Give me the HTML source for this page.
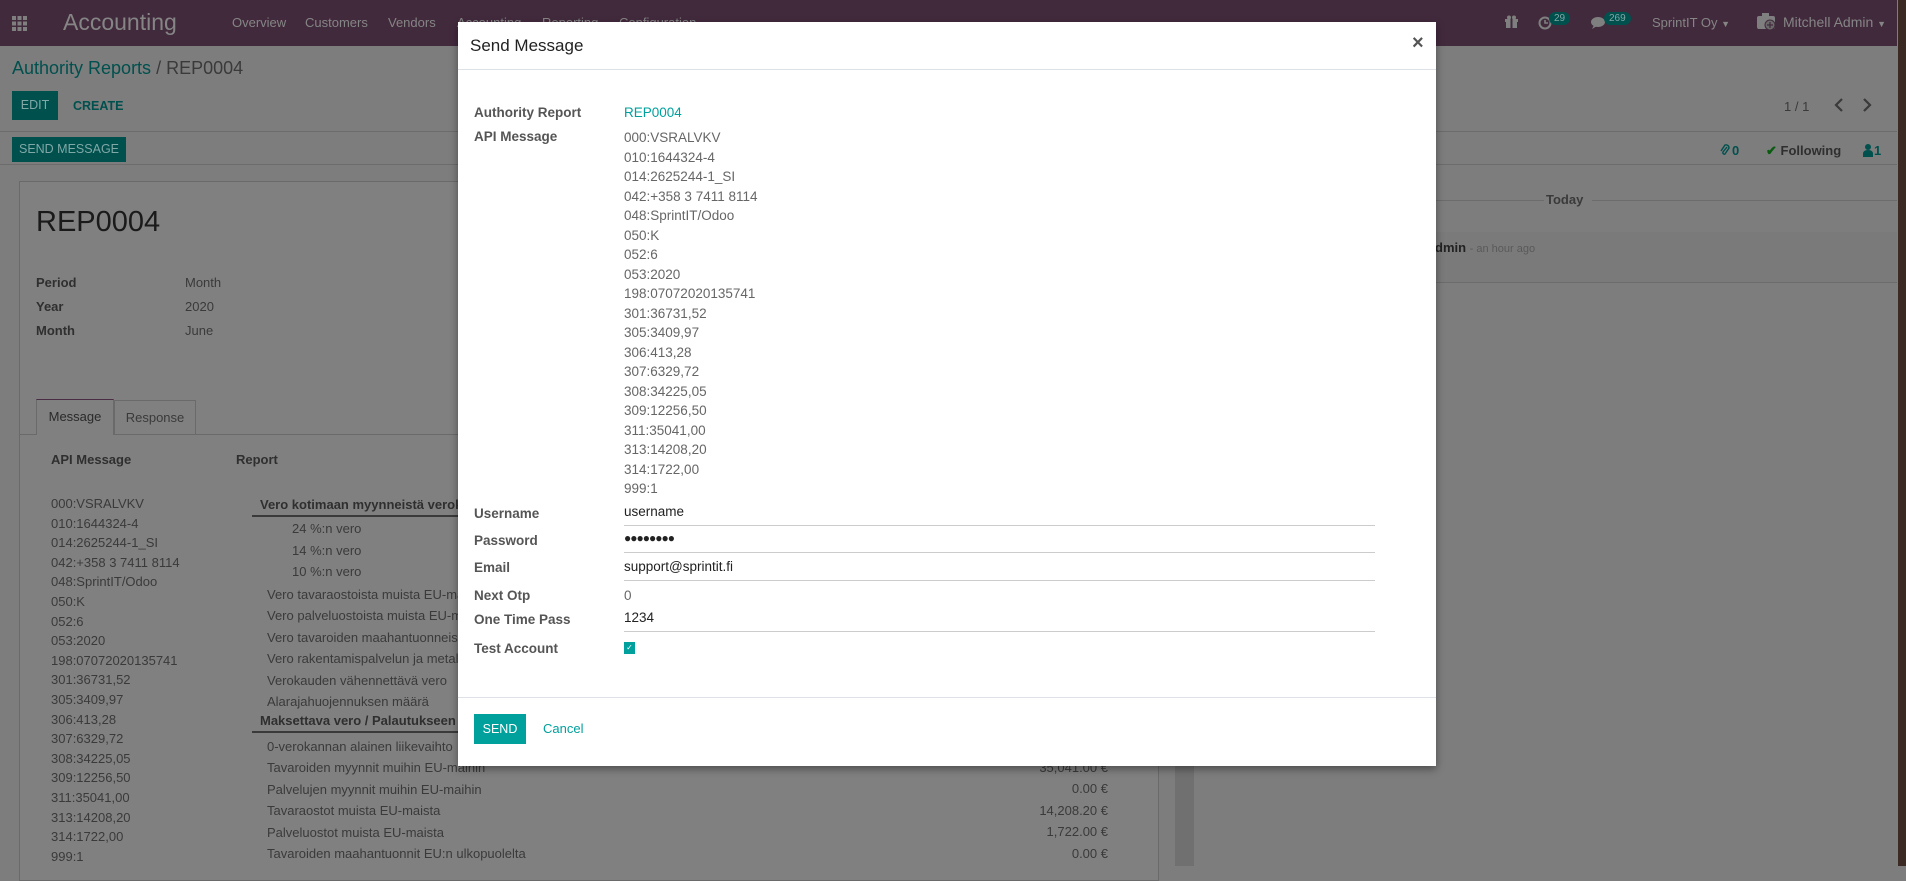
<!DOCTYPE html>
<html><head><meta charset="utf-8"><style>
*{margin:0;padding:0;box-sizing:border-box}
body{width:1906px;height:866px;overflow:hidden;position:relative;background:#7d7d7d;font-family:"Liberation Sans",sans-serif;font-size:13px;color:#333}
.a{position:absolute;white-space:nowrap}
.nav{position:absolute;left:0;top:0;width:1897px;height:46px;background:#422a3d}
.nm{position:absolute;top:15px;color:#858585;font-size:13px}
.badge{position:absolute;background:#00504e;color:#7fa8a6;font-size:10px;border-radius:9px;padding:1px 5px;top:12px}
.lbl{font-weight:bold;color:#2f2f2f}
.v{color:#3a3a3a}
.ml{position:absolute;left:16px;font-weight:bold;color:#555;font-size:13.5px}
.mv{position:absolute;left:166px;color:#666;font-size:13.5px}
.inp{position:absolute;left:166px;width:751px;border-bottom:1px solid #ccc;color:#222;font-size:13.5px;height:22px}
</style></head><body>
<div class="nav">
 <svg class="a" style="left:12px;top:16px" width="15" height="15" viewBox="0 0 15 15" fill="#7f7f7f"><rect x="0" y="0" width="4" height="4"/><rect x="5.5" y="0" width="4" height="4"/><rect x="11" y="0" width="4" height="4"/><rect x="0" y="5.5" width="4" height="4"/><rect x="5.5" y="5.5" width="4" height="4"/><rect x="11" y="5.5" width="4" height="4"/><rect x="0" y="11" width="4" height="4"/><rect x="5.5" y="11" width="4" height="4"/><rect x="11" y="11" width="4" height="4"/></svg>
 <div class="a" style="left:63px;top:9px;font-size:23px;color:#858585">Accounting</div>
 <div class="nm" style="left:232px">Overview</div>
 <div class="nm" style="left:305px">Customers</div>
 <div class="nm" style="left:388px">Vendors</div>
 <div class="nm" style="left:457px">Accounting</div>
 <div class="nm" style="left:542px">Reporting</div>
 <div class="nm" style="left:619px">Configuration</div>
 <svg class="a" style="left:1505px;top:15px" width="13" height="13" viewBox="0 0 13 13" fill="#7f7f7f"><rect x="0" y="4" width="13" height="3"/><rect x="1" y="7" width="11" height="6"/><rect x="5.5" y="4" width="2" height="9" fill="#422a3d"/><circle cx="4" cy="2.5" r="2"/><circle cx="9" cy="2.5" r="2"/></svg>
 <svg class="a" style="left:1538px;top:16px" width="14" height="14" viewBox="0 0 14 14"><circle cx="7" cy="7" r="5.5" fill="none" stroke="#7f7f7f" stroke-width="2"/><path d="M7 4v3h3" stroke="#7f7f7f" stroke-width="1.6" fill="none"/></svg>
 <div class="badge" style="left:1549px">29</div>
 <svg class="a" style="left:1591px;top:16px" width="16" height="14" viewBox="0 0 16 14" fill="#7f7f7f"><ellipse cx="7" cy="6" rx="7" ry="5"/><path d="M3 9l-2 4 5-3z"/></svg>
 <div class="badge" style="left:1604px">269</div>
 <div class="nm" style="left:1652px">SprintIT Oy <span style="font-size:9px">▼</span></div>
 <svg class="a" style="left:1757px;top:13px" width="20" height="18" viewBox="0 0 20 18" fill="#7f7f7f"><rect x="0" y="3" width="18" height="13" rx="2"/><rect x="5" y="0" width="7" height="4"/><circle cx="13" cy="12" r="5" fill="#6a6a6a" stroke="#422a3d"/><path d="M13 9v6M10 12h6" stroke="#422a3d" stroke-width="1.2"/></svg>
 <div class="nm" style="left:1783px;font-size:14px;top:14px">Mitchell Admin <span style="font-size:9px">▼</span></div>
</div>
<div class="a" style="left:1897px;top:0;width:1px;height:866px;background:#1ba0d0"></div>
<div class="a" style="left:1898px;top:0;width:8px;height:866px;background:#3b2a24"></div>

<div class="a" style="left:12px;top:58px;font-size:18px;color:#00504e">Authority Reports <span style="color:#3a3a3a">/ REP0004</span></div>
<div class="a" style="left:12px;top:91px;width:46px;height:29px;background:#00504e;color:#7fa8a6;font-size:12.5px;line-height:29px;text-align:center">EDIT</div>
<div class="a" style="left:73px;top:99px;color:#00504e;font-size:12.5px;font-weight:bold">CREATE</div>
<div class="a" style="left:1784px;top:99px;color:#3a3a3a;font-size:13px">1 / 1</div>
<svg class="a" style="left:1834px;top:98px" width="10" height="14" viewBox="0 0 10 14"><path d="M8 1L2 7l6 6" stroke="#3a3a3a" stroke-width="2.2" fill="none"/></svg>
<svg class="a" style="left:1862px;top:98px" width="10" height="14" viewBox="0 0 10 14"><path d="M2 1l6 6-6 6" stroke="#3a3a3a" stroke-width="2.2" fill="none"/></svg>
<div class="a" style="left:0;top:131px;width:1897px;height:1px;background:#6c6c6c"></div>
<div class="a" style="left:12px;top:137px;width:114px;height:25px;background:#00504e;color:#7fa8a6;font-size:12.5px;line-height:25px;text-align:center">SEND MESSAGE</div>
<svg class="a" style="left:1720px;top:143px" width="10" height="14" viewBox="0 0 10 14"><path d="M7 4L3 9a1.5 1.5 0 0 0 2 2l4-6a3 3 0 0 0-4-3L1 8" stroke="#00504e" stroke-width="1.4" fill="none"/></svg>
<div class="a" style="left:1732px;top:143px;color:#00504e;font-size:13px;font-weight:bold">0</div>
<div class="a" style="left:1766px;top:143px;color:#2f2f2f;font-size:13px;font-weight:bold"><span style="color:#0a5a10">&#10004;</span> Following</div>
<svg class="a" style="left:1863px;top:143px" width="10" height="14" viewBox="0 0 10 14" fill="#00504e"><circle cx="5" cy="4" r="3"/><path d="M0 14v-3q0-4 5-4t5 4v3z"/></svg>
<div class="a" style="left:1874px;top:143px;color:#00504e;font-size:13px;font-weight:bold">1</div>
<div class="a" style="left:0;top:164px;width:1897px;height:1px;background:#6c6c6c"></div>

<div class="a" style="left:19px;top:181px;width:1140px;height:700px;background:#808080;border:1px solid #6a6a6a"></div>
<div class="a" style="left:1175px;top:165px;width:19px;height:701px;background:#707070"></div>
<div class="a" style="left:1194px;top:200px;width:350px;height:1px;background:#6c6c6c"></div>
<div class="a" style="left:1546px;top:192px;font-weight:bold;color:#3a3a3a;font-size:13px">Today</div>
<div class="a" style="left:1592px;top:200px;width:305px;height:1px;background:#6c6c6c"></div>
<div class="a" style="left:1194px;top:232px;width:703px;height:51px;background:#7a7a7a;border-bottom:1px solid #6c6c6c"></div>
<div class="a" style="left:1435px;top:240px;font-size:13px;font-weight:bold;color:#222">dmin <span style="font-weight:normal;color:#5a5a5a;font-size:11px">- an hour ago</span></div>

<div class="a" style="left:36px;top:206px;font-size:29px;color:#1a1a1a">REP0004</div>
<div class="a lbl" style="left:36px;top:275px">Period</div><div class="a v" style="left:185px;top:275px">Month</div>
<div class="a lbl" style="left:36px;top:299px">Year</div><div class="a v" style="left:185px;top:299px">2020</div>
<div class="a lbl" style="left:36px;top:323px">Month</div><div class="a v" style="left:185px;top:323px">June</div>

<div class="a" style="left:19px;top:434px;width:1140px;height:1px;background:#6a6a6a"></div>
<div class="a" style="left:36px;top:399px;width:78px;height:36px;background:#808080;border:1px solid #6a6a6a;border-top:1px solid #4a2d44;border-bottom:none;color:#2a2a2a;line-height:34px;text-align:center">Message</div>
<div class="a" style="left:114px;top:400px;width:82px;height:34px;border:1px solid #6a6a6a;border-bottom:none;color:#3a3a3a;line-height:34px;text-align:center">Response</div>
<div class="a lbl" style="left:51px;top:452px">API Message</div>
<div class="a lbl" style="left:236px;top:452px">Report</div>
<div class="a v" style="left:51px;top:494px;line-height:19.6px">000:VSRALVKV<br>010:1644324-4<br>014:2625244-1_SI<br>042:+358 3 7411 8114<br>048:SprintIT/Odoo<br>050:K<br>052:6<br>053:2020<br>198:07072020135741<br>301:36731,52<br>305:3409,97<br>306:413,28<br>307:6329,72<br>308:34225,05<br>309:12256,50<br>311:35041,00<br>313:14208,20<br>314:1722,00<br>999:1</div>
<div class="a lbl" style="left:260px;top:497px">Vero kotimaan myynneistä verokausi</div>
<div class="a" style="left:252px;top:515px;width:900px;height:2px;background:#3a3a3a"></div>
<div class="a v" style="left:292px;top:518px;line-height:21.5px">24 %:n vero<br>14 %:n vero<br>10 %:n vero</div>
<div class="a v" style="left:267px;top:584px;line-height:21.4px">Vero tavaraostoista muista EU-maista<br>Vero palveluostoista muista EU-maista<br>Vero tavaroiden maahantuonneista<br>Vero rakentamispalvelun ja metalliromun<br>Verokauden vähennettävä vero<br>Alarajahuojennuksen määrä</div>
<div class="a lbl" style="left:260px;top:713px">Maksettava vero / Palautukseen oikeuttava</div>
<div class="a" style="left:252px;top:731px;width:900px;height:2px;background:#3a3a3a"></div>
<div class="a v" style="left:267px;top:736px;line-height:21.4px">0-verokannan alainen liikevaihto<br>Tavaroiden myynnit muihin EU-maihin<br>Palvelujen myynnit muihin EU-maihin<br>Tavaraostot muista EU-maista<br>Palveluostot muista EU-maista<br>Tavaroiden maahantuonnit EU:n ulkopuolelta</div>
<div class="a v" style="left:900px;width:208px;text-align:right;top:757px;line-height:21.4px;white-space:normal">35,041.00 €<br>0.00 €<br>14,208.20 €<br>1,722.00 €<br>0.00 €</div>

<div class="a" style="left:458px;top:22px;width:978px;height:744px;background:#fff;box-shadow:0 3px 8px rgba(0,0,0,.4)">
 <div class="a" style="left:12px;top:14px;font-size:17px;color:#222">Send Message</div>
 <div class="a" style="left:954px;top:10px;font-size:20px;font-weight:bold;color:#555">×</div>
 <div class="a" style="left:0;top:47px;width:978px;height:1px;background:#dee2e6"></div>
 <div class="ml" style="top:83px">Authority Report</div>
 <div class="a" style="left:166px;top:83px;color:#00A09D;font-size:13.5px">REP0004</div>
 <div class="ml" style="top:107px">API Message</div>
 <div class="mv" style="top:106px;line-height:19.5px">000:VSRALVKV<br>010:1644324-4<br>014:2625244-1_SI<br>042:+358 3 7411 8114<br>048:SprintIT/Odoo<br>050:K<br>052:6<br>053:2020<br>198:07072020135741<br>301:36731,52<br>305:3409,97<br>306:413,28<br>307:6329,72<br>308:34225,05<br>309:12256,50<br>311:35041,00<br>313:14208,20<br>314:1722,00<br>999:1</div>
 <div class="ml" style="top:484px">Username</div><div class="inp" style="top:482px">username</div>
 <div class="ml" style="top:511px">Password</div><div class="inp" style="top:509px;font-size:12px;letter-spacing:-1px">●●●●●●●●</div>
 <div class="ml" style="top:538px">Email</div><div class="inp" style="top:537px">support@sprintit.fi</div>
 <div class="ml" style="top:566px">Next Otp</div><div class="mv" style="top:566px">0</div>
 <div class="ml" style="top:590px">One Time Pass</div><div class="inp" style="top:588px">1234</div>
 <div class="ml" style="top:619px">Test Account</div>
 <div class="a" style="left:166px;top:620px;width:11px;height:12px;background:#00A09D;color:#fff;font-size:8px;line-height:12px;text-align:center">✓</div>
 <div class="a" style="left:0;top:675px;width:978px;height:1px;background:#dee2e6"></div>
 <div class="a" style="left:16px;top:692px;width:52px;height:30px;background:#00A09D;color:#fff;font-size:12.5px;line-height:30px;text-align:center">SEND</div>
 <div class="a" style="left:85px;top:699px;color:#00A09D;font-size:13px">Cancel</div>
</div>
</body></html>
